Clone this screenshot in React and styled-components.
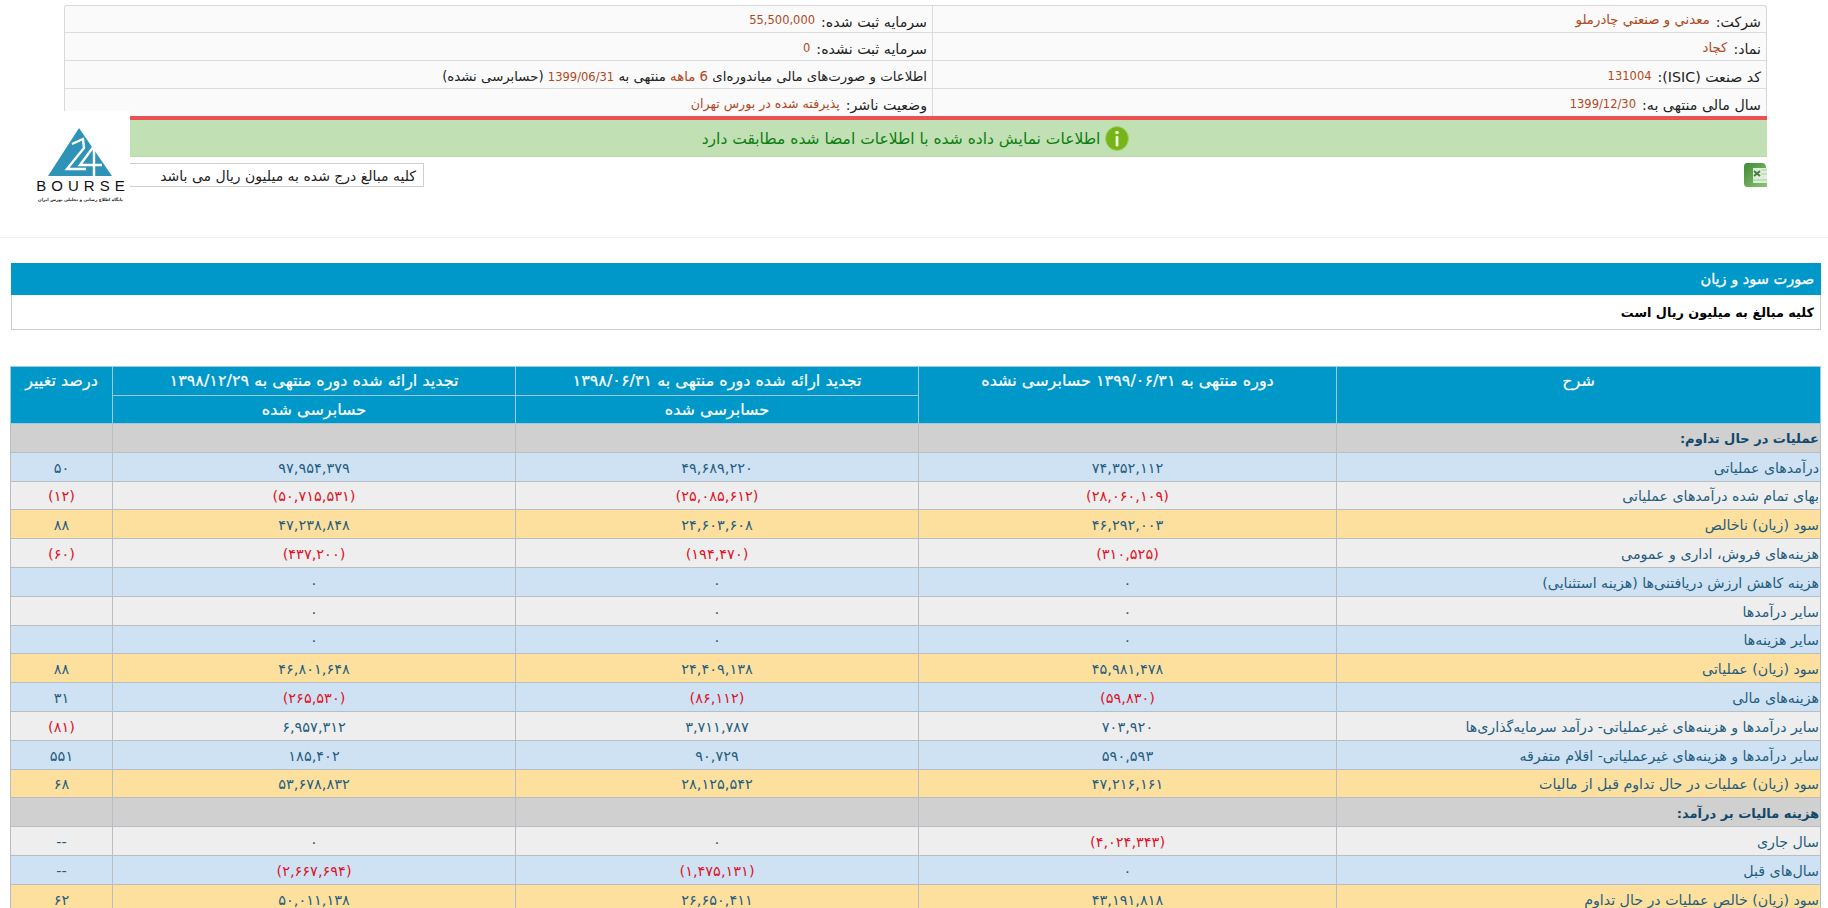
import React from 'react';
import styled, { createGlobalStyle } from 'styled-components';

const FONT = '"DejaVu Sans", "Noto Sans", sans-serif';

const rowColors = {
  section: '#d0d0d0',
  blue: '#cfe2f3',
  gray: '#eeeeee',
  total: '#fde09e',
};

const rows = [
  { kind: 'section', label: 'عملیات در حال تداوم:', cells: ['', '', '', ''] },
  { kind: 'blue', label: 'درآمدهای عملیاتی', cells: ['۷۴,۳۵۲,۱۱۲', '۴۹,۶۸۹,۲۲۰', '۹۷,۹۵۴,۳۷۹', '۵۰'] },
  { kind: 'gray', label: 'بهای تمام شده درآمدهای عملیاتی', cells: ['(۲۸,۰۶۰,۱۰۹)', '(۲۵,۰۸۵,۶۱۲)', '(۵۰,۷۱۵,۵۳۱)', '(۱۲)'] },
  { kind: 'total', label: 'سود (زیان) ناخالص', cells: ['۴۶,۲۹۲,۰۰۳', '۲۴,۶۰۳,۶۰۸', '۴۷,۲۳۸,۸۴۸', '۸۸'] },
  { kind: 'gray', label: 'هزینه‌های فروش، اداری و عمومی', cells: ['(۳۱۰,۵۲۵)', '(۱۹۴,۴۷۰)', '(۴۳۷,۲۰۰)', '(۶۰)'] },
  { kind: 'blue', label: 'هزینه کاهش ارزش دریافتنی‌ها (هزینه استثنایی)', cells: ['۰', '۰', '۰', ''] },
  { kind: 'gray', label: 'سایر درآمدها', cells: ['۰', '۰', '۰', ''] },
  { kind: 'blue', label: 'سایر هزینه‌ها', cells: ['۰', '۰', '۰', ''] },
  { kind: 'total', label: 'سود (زیان) عملیاتی', cells: ['۴۵,۹۸۱,۴۷۸', '۲۴,۴۰۹,۱۳۸', '۴۶,۸۰۱,۶۴۸', '۸۸'] },
  { kind: 'blue', label: 'هزینه‌های مالی', cells: ['(۵۹,۸۳۰)', '(۸۶,۱۱۲)', '(۲۶۵,۵۳۰)', '۳۱'] },
  { kind: 'gray', label: 'سایر درآمدها و هزینه‌های غیرعملیاتی- درآمد سرمایه‌گذاری‌ها', cells: ['۷۰۳,۹۲۰', '۳,۷۱۱,۷۸۷', '۶,۹۵۷,۳۱۲', '(۸۱)'] },
  { kind: 'blue', label: 'سایر درآمدها و هزینه‌های غیرعملیاتی- اقلام متفرقه', cells: ['۵۹۰,۵۹۳', '۹۰,۷۲۹', '۱۸۵,۴۰۲', '۵۵۱'] },
  { kind: 'total', label: 'سود (زیان) عملیات در حال تداوم قبل از مالیات', cells: ['۴۷,۲۱۶,۱۶۱', '۲۸,۱۲۵,۵۴۲', '۵۳,۶۷۸,۸۳۲', '۶۸'] },
  { kind: 'section', label: 'هزینه مالیات بر درآمد:', cells: ['', '', '', ''] },
  { kind: 'gray', label: 'سال جاری', cells: ['(۴,۰۲۴,۳۴۳)', '۰', '۰', '--'] },
  { kind: 'blue', label: 'سال‌های قبل', cells: ['۰', '(۱,۴۷۵,۱۳۱)', '(۲,۶۶۷,۶۹۴)', '--'] },
  { kind: 'total', label: 'سود (زیان) خالص عملیات در حال تداوم', cells: ['۴۳,۱۹۱,۸۱۸', '۲۶,۶۵۰,۴۱۱', '۵۰,۰۱۱,۱۳۸', '۶۲'] },
];

const App = () => (
  <>
    <GlobalStyle />
    <Top>
      <Logo>
        <svg width="99" height="68" viewBox="0 0 99 68" aria-hidden="true">
          <path d="M48 17 L81 65 L17 65 Z" fill="#2f93b8" />
          <path d="M41 33 L52 28 L53 37 L36 58 L55 58" fill="none" stroke="#fff" strokeWidth="2.4" />
          <path d="M63 35 L49 54 L71 54 M63 35 L63 66" fill="none" stroke="#fff" strokeWidth="2.4" />
        </svg>
        <LogoName>BOURSE</LogoName>
        <LogoTag>پایگاه اطلاع رسانی و تحلیلی بورس ایران</LogoTag>
      </Logo>
      <InfoGrid>
        <InfoCell rowHeight={27}>
          <InfoLabel>شرکت:</InfoLabel>
          <InfoValue size={13.3}>معدني و صنعتي چادرملو</InfoValue>
        </InfoCell>
        <InfoCell rowHeight={27}>
          <InfoLabel>سرمایه ثبت شده:</InfoLabel>
          <InfoValue>55,500,000</InfoValue>
        </InfoCell>
        <InfoCell>
          <InfoLabel>نماد:</InfoLabel>
          <InfoValue size={13.3}>کچاد</InfoValue>
        </InfoCell>
        <InfoCell>
          <InfoLabel>سرمایه ثبت نشده:</InfoLabel>
          <InfoValue>0</InfoValue>
        </InfoCell>
        <InfoCell>
          <InfoLabel>کد صنعت (ISIC):</InfoLabel>
          <InfoValue>131004</InfoValue>
        </InfoCell>
        <InfoCell>
          <InfoLabel size={13.3}>
            اطلاعات و صورت‌های مالی میاندوره‌ای <Accent>6 ماهه</Accent> منتهی به{' '}
            <AccentDate>1399/06/31</AccentDate> (حسابرسی نشده)
          </InfoLabel>
        </InfoCell>
        <InfoCell last rowHeight={27}>
          <InfoLabel>سال مالی منتهی به:</InfoLabel>
          <InfoValue>1399/12/30</InfoValue>
        </InfoCell>
        <InfoCell last rowHeight={27}>
          <InfoLabel>وضعیت ناشر:</InfoLabel>
          <InfoValue size={12.6}>پذیرفته شده در بورس تهران</InfoValue>
        </InfoCell>
      </InfoGrid>
      <Banner>
        <svg width="24" height="25" viewBox="0 0 24 25" aria-hidden="true">
          <ellipse cx="12" cy="12.5" rx="11.5" ry="12" fill="#75b51a" stroke="#a8d070" strokeWidth="1" />
          <circle cx="12" cy="6.5" r="1.8" fill="#eef7dc" />
          <rect x="10.6" y="10" width="2.8" height="10.5" rx="1" fill="#eef7dc" />
        </svg>
        <span>اطلاعات نمایش داده شده با اطلاعات امضا شده مطابقت دارد</span>
      </Banner>
      <Tools>
        <svg width="23" height="24" viewBox="0 0 23 24" aria-hidden="true">
          <defs>
            <linearGradient id="sheetBody" x1="0" y1="0" x2="1" y2="1">
              <stop offset="0" stopColor="#3f8a33" />
              <stop offset="1" stopColor="#8fc478" />
            </linearGradient>
          </defs>
          <path d="M3 0 H19 Q22 1 22 4 V6 H23 V24 H3 Q0 24 0 20 V4 Q0 0 3 0 Z" fill="url(#sheetBody)" />
          <rect x="9" y="5" width="14" height="15" fill="#dfeed8" />
          <path d="M10 8 L16 13 M16 8 L10 13" stroke="#4a7a44" strokeWidth="2" />
          <path d="M9 17 H23 M17 7 H23 M17 11 H23" stroke="#a9cf9e" strokeWidth="1" />
        </svg>
        <Note>کلیه مبالغ درج شده به میلیون ریال می باشد</Note>
      </Tools>
    </Top>
    <Report>
      <SectionBar>صورت سود و زیان</SectionBar>
      <SectionNote>کلیه مبالغ به میلیون ریال است</SectionNote>
      <Table>
        <colgroup>
          <col style={{ width: 484 }} />
          <col style={{ width: 418 }} />
          <col style={{ width: 403 }} />
          <col style={{ width: 403 }} />
          <col style={{ width: 102 }} />
        </colgroup>
        <thead>
          <tr>
            <Head rowSpan={2}>شرح</Head>
            <Head rowSpan={2}>دوره منتهی به ۱۳۹۹/۰۶/۳۱ حسابرسی نشده</Head>
            <Head>تجدید ارائه شده دوره منتهی به ۱۳۹۸/۰۶/۳۱</Head>
            <Head>تجدید ارائه شده دوره منتهی به ۱۳۹۸/۱۲/۲۹</Head>
            <Head rowSpan={2}>درصد تغییر</Head>
          </tr>
          <tr>
            <Head>حسابرسی شده</Head>
            <Head>حسابرسی شده</Head>
          </tr>
        </thead>
        <tbody>
          {rows.map((row) => (
            <Row key={row.label} kind={row.kind}>
              <Label section={row.kind === 'section'}>{row.label}</Label>
              {row.cells.map((cell, i) => (
                <Num key={i} negative={cell.startsWith('(')}>
                  {cell}
                </Num>
              ))}
            </Row>
          ))}
        </tbody>
      </Table>
    </Report>
  </>
);

const GlobalStyle = createGlobalStyle`
  html, body {
    margin: 0;
    padding: 0;
    overflow: hidden;
    background: #fff;
    font-family: ${FONT};
  }
`;

const Top = styled.header`
  position: relative;
  box-sizing: border-box;
  height: 238px;
  padding: 5px 61px 0 64px;
  direction: rtl;
  border-bottom: 1px solid #f0f0f0;
`;

const Logo = styled.div`
  position: absolute;
  left: 31px;
  top: 111px;
  width: 99px;
  height: 96px;
  background: #fff;
  display: flex;
  flex-direction: column;
  align-items: center;
  direction: ltr;
`;

const LogoName = styled.div`
  margin-top: 0;
  margin-right: -5px;
  font: 400 15px/14px "Liberation Sans", sans-serif;
  letter-spacing: 5px;
  color: #111;
`;

const LogoTag = styled.div`
  margin-top: 3px;
  font: 700 4.2px/7px ${FONT};
  white-space: nowrap;
  direction: rtl;
  color: #222;
`;

const InfoGrid = styled.div`
  display: grid;
  grid-template-columns: 834px 1fr;
  border: 1px solid #d8d8d8;
  border-bottom: 0;
  border-radius: 3px 3px 0 0;
  background: #fafafa;
`;

const InfoCell = styled.div`
  box-sizing: border-box;
  height: ${({ rowHeight = 28 }) => rowHeight}px;
  padding: 2px 5px 0;
  display: flex;
  align-items: center;
  gap: 6px;
  border-bottom: ${({ last }) => (last ? 0 : '1px solid #dcdcdc')};

  &:nth-child(odd) {
    border-left: 1px solid #dcdcdc;
  }
`;

const InfoLabel = styled.span`
  font-size: ${({ size = 14.2 }) => size}px;
  line-height: 18px;
  color: #222;
  padding-top: 3px;
  white-space: nowrap;
`;

const InfoValue = styled.span`
  font-size: ${({ size = 11.5 }) => size}px;
  line-height: 18px;
  color: #b0481c;
`;

const Accent = styled.span`
  color: #b0481c;
`;

const AccentDate = styled(Accent)`
  font-size: 11.5px;
`;

const Banner = styled.div`
  box-sizing: border-box;
  height: 41px;
  margin-left: 66px;
  padding: 1px 66px 0 0;
  display: flex;
  align-items: center;
  justify-content: center;
  gap: 5px;
  border-top: 4px solid #e95152;
  border-bottom: 1px solid #b9d6ad;
  background: #c1e1b4;
  font-size: 15.5px;
  color: #0d7d12;
`;

const Tools = styled.div`
  display: flex;
  justify-content: space-between;
  align-items: center;
  margin: 6px 0 0 66px;
`;

const Note = styled.div`
  box-sizing: border-box;
  height: 24px;
  width: 294px;
  padding: 2px 7px 0;
  display: flex;
  align-items: center;
  border: 1px solid #cfcfcf;
  border-left: 0;
  font-size: 14px;
  color: #222;
  white-space: nowrap;
`;

const Report = styled.main`
  padding: 25px 7px 0 11px;
  direction: rtl;
`;

const SectionBar = styled.div`
  height: 32px;
  padding: 0 7px;
  display: flex;
  align-items: center;
  background: #0097c9;
  color: #fff;
  font-size: 14.5px;
  -webkit-text-stroke: 0.3px #fff;
`;

const SectionNote = styled.div`
  box-sizing: border-box;
  height: 35px;
  padding: 0 6px;
  display: flex;
  align-items: center;
  border: 1px solid #cccccc;
  border-top: 0;
  font-size: 12.8px;
  font-weight: 700;
  color: #000;
`;

const Table = styled.table`
  width: 1810px;
  margin-top: 36px;
  table-layout: fixed;
  border-collapse: collapse;
`;

const Head = styled.th`
  box-sizing: border-box;
  height: 28.5px;
  padding: 4px 4px 0;
  vertical-align: top;
  border: 1px solid #9fc9dc;
  background: #0097c9;
  color: #fff;
  font-size: 16px;
  font-weight: 400;
  line-height: 20px;
  white-space: nowrap;
  -webkit-text-stroke: 0.2px #fff;
`;

const Row = styled.tr`
  height: 28.8px;
  background: ${({ kind }) => rowColors[kind]};
`;

const Label = styled.td`
  padding: 2px 1px 0;
  border: 1px solid #b8bec4;
  text-align: right;
  color: ${({ section }) => (section ? '#10496b' : '#1f5d80')};
  font-size: ${({ section }) => (section ? 13 : 14.2)}px;
  font-weight: ${({ section }) => (section ? 700 : 400)};
  white-space: nowrap;
`;

const Num = styled.td`
  padding: 2px 0 0;
  border: 1px solid #b8bec4;
  text-align: center;
  color: ${({ negative }) => (negative ? '#dd1328' : '#1f5d80')};
  font-size: 14.5px;
`;

export default App;
